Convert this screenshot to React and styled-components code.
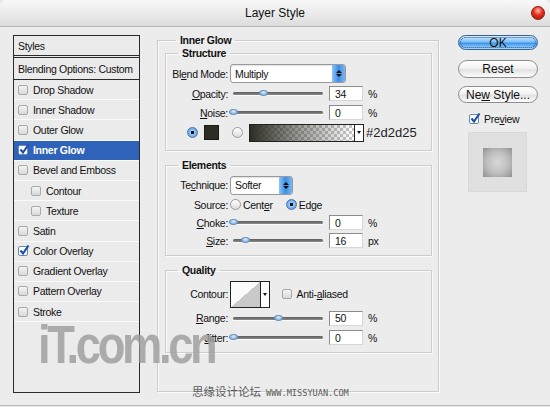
import React from 'react';
import styled, { createGlobalStyle } from 'styled-components';

const GlobalStyle = createGlobalStyle`
  body {
    margin: 0;
    background: #e6e6e6;
    font-family: "Liberation Sans", Arial, sans-serif;
  }
`;

const Window = styled.div`
  position: relative;
  width: 550px;
  height: 405px;
  background: #ececec;
  border-radius: 6px 6px 0 0;
  border-bottom: 1px solid #b9b9b9;
  overflow: hidden;
  display: flex;
  flex-direction: column;
  font-size: 10.5px;
  letter-spacing: -0.3px;
  color: #111;
`;

const TitleBar = styled.div`
  height: 27px;
  box-sizing: border-box;
  flex-shrink: 0;
  background: linear-gradient(#f8f8f8, #e8e8e8 60%, #dcdcdc);
  border-bottom: 1px solid #b4b4b4;
  display: grid;
  grid-template-columns: 1fr auto 1fr;
  align-items: center;
  padding: 0 5px;
`;

const Title = styled.div`
  font-size: 12px;
  letter-spacing: 0;
  color: #111;
`;

const CloseDot = styled.div`
  justify-self: end;
  width: 12px;
  height: 12px;
  border-radius: 50%;
  background: radial-gradient(circle at 50% 30%, #ffb4a8 0%, #e0321e 45%, #a80e04 100%);
  border: 1px solid #8a1c10;
`;

const Body = styled.div`
  display: flex;
  padding: 7px 0 0 13px;
`;

/* ---------- styles list ---------- */

const StylesList = styled.div`
  margin-top: 1px;
  width: 127px;
  height: 358px;
  box-sizing: border-box;
  border: 1px solid #2b2b2b;
  background: #ebebeb;
  display: flex;
  flex-direction: column;
`;

const ListHead = styled.div`
  height: 22px;
  box-sizing: border-box;
  padding-left: 4px;
  display: flex;
  align-items: center;
  white-space: nowrap;
  border-bottom: ${p => (p.double ? '3px double #2b2b2b' : '1px solid #2b2b2b')};
`;

const ListRow = styled.div`
  height: 20.2px;
  box-sizing: border-box;
  display: flex;
  align-items: center;
  gap: 5px;
  white-space: nowrap;
  padding-left: ${p => (p.indent ? 17 : 4)}px;
  border-bottom: 1px solid #fbfbfb;
  background: ${p => (p.active ? '#2f63b9' : 'transparent')};
  color: ${p => (p.active ? '#fff' : '#111')};
  font-weight: ${p => (p.active ? 700 : 400)};
`;

const Box = styled.span`
  width: 10px;
  height: 10px;
  flex-shrink: 0;
  box-sizing: border-box;
  border-radius: 2px;
  border: 1px solid ${p => (p.checked ? '#6b87b2' : '#a9a9a9')};
  background: ${p => (p.checked ? '#fff' : 'linear-gradient(#f4f4f4, #d9d9d9)')};
  position: relative;
  display: inline-flex;
`;

const CheckMark = styled.svg`
  position: absolute;
  left: 0;
  top: -3px;
`;

const Checkbox = ({ checked }) => (
  <Box checked={checked}>
    {checked && (
      <CheckMark width="11" height="12" viewBox="0 0 11 12">
        <path d="M1.5 6.5 L4 9.5 L9.5 1.5" stroke="#1f4fa8" strokeWidth="2.2" fill="none" />
      </CheckMark>
    )}
  </Box>
);

/* ---------- main panel ---------- */

const Main = styled.div`
  margin-left: 17px;
  width: 282px;
`;

const Group = styled.fieldset`
  margin: ${p => p.gap || 0}px 0 0;
  padding: ${p => p.pad || 0}px ${p => (p.outer ? '6px 0 7px' : '0 0 0')};
  height: ${p => p.h}px;
  box-sizing: border-box;
  border: 1px solid #cdcdcd;
  box-shadow: inset 1px 1px 0 #fafafa, 1px 1px 0 #fafafa;
  min-width: 0;
`;

const Legend = styled.legend`
  margin-left: ${p => p.offset}px;
  padding: 0 4px;
  font-weight: 700;
  font-size: 10.5px;
  line-height: 13px;
  color: #111;
`;

const Row = styled.div`
  height: ${p => p.h}px;
  display: grid;
  grid-template-columns: 62px auto;
  column-gap: 2px;
  align-items: center;
`;

const Label = styled.span`
  text-align: right;
  white-space: nowrap;
`;

const Controls = styled.div`
  display: flex;
  align-items: center;
  gap: ${p => p.gap ?? 6}px;
`;

const Select = styled.div`
  width: ${p => p.w}px;
  height: 19px;
  box-sizing: border-box;
  border: 1px solid #9a9a9a;
  border-radius: 3px;
  background: #fff;
  display: flex;
  align-items: center;
  justify-content: space-between;
  padding-left: 4px;
  box-shadow: inset 0 1px 1px rgba(0, 0, 0, 0.12);
`;

const Stepper = styled.div`
  width: 13px;
  height: 17px;
  border-radius: 0 2px 2px 0;
  background: linear-gradient(90deg, #8ec3f8, #3d8fe6 50%, #78b6f3);
  display: flex;
  flex-direction: column;
  align-items: center;
  justify-content: center;
  gap: 1px;
`;

const Tri = styled.span`
  width: 0;
  height: 0;
  border-left: 3px solid transparent;
  border-right: 3px solid transparent;
  ${p => (p.up ? 'border-bottom: 3px solid #111;' : 'border-top: 3px solid #111;')}
`;

const DropSelect = ({ w, children }) => (
  <Select w={w}>
    <span>{children}</span>
    <Stepper>
      <Tri up />
      <Tri />
    </Stepper>
  </Select>
);

const Track = styled.div`
  position: relative;
  width: 90px;
  height: 3px;
  margin-left: 3px;
  border-radius: 2px;
  background: linear-gradient(#5d5d5d, #8a8a8a);
  box-shadow: 0 1px 0 #fafafa;
`;

const Thumb = styled.span`
  position: absolute;
  top: -2px;
  width: 9px;
  height: 6px;
  margin-left: -4px;
  border-radius: 50%;
  background: radial-gradient(ellipse at 50% 30%, #e6f2ff, #7fb2e6 70%, #5a8fc8);
  border: 1px solid #6d8fb5;
  box-sizing: border-box;
`;

const Slider = ({ value }) => (
  <Track>
    <Thumb style={{ left: `${value}%` }} />
  </Track>
);

const NumBox = styled.div`
  width: 34px;
  height: 15px;
  box-sizing: border-box;
  border: 1px solid #8c8c8c;
  border-right-color: #d6d6d6;
  border-bottom-color: #d6d6d6;
  background: #fff;
  padding-left: 5px;
  display: flex;
  align-items: center;
`;

const Unit = styled.span`
  margin-left: -1px;
`;

const Radio = styled.span`
  width: 11px;
  height: 11px;
  flex-shrink: 0;
  box-sizing: border-box;
  border-radius: 50%;
  border: 1px solid ${p => (p.on ? '#4f74a8' : '#9a9a9a')};
  background: ${p =>
    p.on
      ? 'radial-gradient(circle, #111 0 22%, #9ecbf6 30%, #3f8de2 100%)'
      : 'linear-gradient(#ffffff, #dedede)'};
`;

const ColorLine = styled.div`
  height: ${p => p.h}px;
  display: flex;
  align-items: center;
  padding-left: 21px;
`;

const Swatch = styled.span`
  width: 15px;
  height: 15px;
  margin: 0 13px 0 6px;
  box-sizing: border-box;
  background: #2d2d25;
  border: 1px solid #1a1a14;
`;

const GradientBox = styled.div`
  margin-left: 6px;
  height: 16px;
  display: flex;
  border: 1px solid #222;
`;

const GradientFill = styled.span`
  width: 104px;
  background:
    linear-gradient(90deg, #2d2d25, rgba(45, 45, 37, 0.55) 40%, rgba(45, 45, 37, 0)),
    repeating-conic-gradient(#c8c8c8 0 25%, #ffffff 0 50%) 0 0 / 6px 6px;
`;

const DropArrow = styled.span`
  width: 8px;
  background: #fff;
  border-left: 1px solid #222;
  display: flex;
  align-items: center;
  justify-content: center;
  &::after {
    content: '';
    border-left: 2.5px solid transparent;
    border-right: 2.5px solid transparent;
    border-top: 3px solid #111;
  }
`;

const HexText = styled.span`
  margin-left: 2px;
  font-size: 13px;
  letter-spacing: 0;
  color: #222;
`;

const RadioLabel = styled.span`
  margin: 0 ${p => p.after || 0}px 0 2px;
  white-space: nowrap;
`;

const ContourBox = styled.div`
  height: 25px;
  display: flex;
  border: 1px solid #222;
  margin-right: 12px;
`;

const ContourCurve = styled.span`
  width: 29px;
  background: linear-gradient(to top left, #c9c9c9 50%, #fbfbfb 50%);
`;

/* ---------- right column ---------- */

const Side = styled.div`
  margin-left: 19px;
  width: 80px;
  display: flex;
  flex-direction: column;
`;

const Button = styled.div`
  height: ${p => p.h}px;
  margin-top: ${p => p.top}px;
  box-sizing: border-box;
  border-radius: 9px;
  border: 1px solid ${p => (p.primary ? '#3a5f92' : '#8e8e8e')};
  background: ${p =>
    p.primary
      ? 'linear-gradient(#d5ecff, #7ec0fa 45%, #3f95ec 55%, #a8dbff)'
      : 'linear-gradient(#ffffff, #f3f3f3 45%, #e2e2e2 55%, #fdfdfd)'};
  outline: ${p => (p.primary ? '1px dotted #27558a' : 'none')};
  outline-offset: -3px;
  display: flex;
  align-items: center;
  justify-content: center;
  font-size: 12px;
  letter-spacing: 0;
  color: #111;
  white-space: nowrap;
`;

const PreviewLine = styled.label`
  margin: 9px 0 0 11px;
  height: 13px;
  display: flex;
  align-items: center;
  gap: 5px;
`;

const PreviewBox = styled.div`
  margin: 6px 0 0 9px;
  width: 59px;
  height: 60px;
  background: #e0e0e0;
  border: 1px solid #ececec;
  box-shadow: inset 0 0 0 1px #d8d8d8;
  display: flex;
  align-items: center;
  justify-content: center;
`;

const PreviewSquare = styled.span`
  width: 29px;
  height: 29px;
  background: radial-gradient(circle, #d9d9d9 0%, #bdbdbd 55%, #8f8f8f 100%);
`;

/* ---------- watermarks ---------- */

const Logo = styled.div`
  position: absolute;
  left: 38px;
  top: 313px;
  font-family: "Liberation Sans", Arial, sans-serif;
  font-weight: 700;
  font-size: 54px;
  letter-spacing: -4px;
  color: rgba(155, 155, 155, 0.8);
  transform: scaleX(0.84);
  transform-origin: left top;
  pointer-events: none;
`;

const Credit = styled.div`
  position: absolute;
  left: 192px;
  top: 383px;
  display: flex;
  align-items: baseline;
  gap: 5px;
  color: #5a5a5a;
  letter-spacing: 0;
  pointer-events: none;
`;

const CreditCn = styled.span`
  font-family: "Noto Sans CJK SC", sans-serif;
  font-size: 11.5px;
`;

const CreditUrl = styled.span`
  font-family: "DejaVu Sans Mono", monospace;
  font-size: 8.6px;
`;

const styleItems = [
  { name: 'Drop Shadow' },
  { name: 'Inner Shadow' },
  { name: 'Outer Glow' },
  { name: 'Inner Glow', checked: true, active: true },
  { name: 'Bevel and Emboss' },
  { name: 'Contour', indent: true },
  { name: 'Texture', indent: true },
  { name: 'Satin' },
  { name: 'Color Overlay', checked: true },
  { name: 'Gradient Overlay' },
  { name: 'Pattern Overlay' },
  { name: 'Stroke' }
];

const SliderRow = ({ h, label, value, num, unit }) => (
  <Row h={h}>
    <Label>{label}</Label>
    <Controls>
      <Slider value={value} />
      <NumBox>{num}</NumBox>
      <Unit>{unit}</Unit>
    </Controls>
  </Row>
);

const App = () => (
  <Window>
    <GlobalStyle />
    <TitleBar>
      <span />
      <Title>Layer Style</Title>
      <CloseDot />
    </TitleBar>

    <Body>
      <StylesList>
        <ListHead double>Styles</ListHead>
        <ListHead>Blending Options: Custom</ListHead>
        {styleItems.map(item => (
          <ListRow key={item.name} indent={item.indent} active={item.active}>
            <Checkbox checked={item.checked} />
            <span>{item.name}</span>
          </ListRow>
        ))}
      </StylesList>

      <Main>
        <Group outer h={358}>
          <Legend offset={11}>Inner Glow</Legend>

          <Group h={104} pad={3}>
            <Legend offset={12}>Structure</Legend>
            <Row h={21}>
              <Label>Bl<u>e</u>nd Mode:</Label>
              <DropSelect w={116}>Multiply</DropSelect>
            </Row>
            <SliderRow h={19} label={<><u>O</u>pacity:</>} value={33} num="34" unit="%" />
            <SliderRow h={19} label={<><u>N</u>oise:</>} value={0} num="0" unit="%" />
            <ColorLine h={21}>
              <Radio on />
              <Swatch />
              <Radio />
              <GradientBox>
                <GradientFill />
                <DropArrow />
              </GradientBox>
              <HexText>#2d2d25</HexText>
            </ColorLine>
          </Group>

          <Group h={97} pad={3} gap={8}>
            <Legend offset={12}>Elements</Legend>
            <Row h={20}>
              <Label>Te<u>c</u>hnique:</Label>
              <DropSelect w={63}>Softer</DropSelect>
            </Row>
            <Row h={19}>
              <Label>Source:</Label>
              <Controls gap={0}>
                <Radio />
                <RadioLabel after={13}>Cent<u>e</u>r</RadioLabel>
                <Radio on />
                <RadioLabel>Ed<u>g</u>e</RadioLabel>
              </Controls>
            </Row>
            <SliderRow h={17} label={<><u>C</u>hoke:</>} value={0} num="0" unit="%" />
            <SliderRow h={19} label={<><u>S</u>ize:</>} value={13} num="16" unit="px" />
          </Group>

          <Group h={89} pad={3} gap={8}>
            <Legend offset={12}>Quality</Legend>
            <Row h={28}>
              <Label>Contour:</Label>
              <Controls gap={0}>
                <ContourBox>
                  <ContourCurve />
                  <DropArrow />
                </ContourBox>
                <Checkbox />
                <RadioLabel>&nbsp;Anti-<u>a</u>liased</RadioLabel>
              </Controls>
            </Row>
            <SliderRow h={20} label={<><u>R</u>ange:</>} value={50} num="50" unit="%" />
            <SliderRow h={19} label={<><u>J</u>itter:</>} value={0} num="0" unit="%" />
          </Group>
        </Group>
      </Main>

      <Side>
        <Button primary h={15} top={1}><span>OK</span></Button>
        <Button h={18} top={10}><span>Reset</span></Button>
        <Button h={17} top={8}><span>Ne<u>w</u> Style...</span></Button>
        <PreviewLine>
          <Checkbox checked />
          <span>Pre<u>v</u>iew</span>
        </PreviewLine>
        <PreviewBox>
          <PreviewSquare />
        </PreviewBox>
      </Side>
    </Body>

    <Logo>iT.com.cn</Logo>
    <Credit>
      <CreditCn>思缘设计论坛</CreditCn>
      <CreditUrl>WWW.MISSYUAN.COM</CreditUrl>
    </Credit>
  </Window>
);

export default App;
